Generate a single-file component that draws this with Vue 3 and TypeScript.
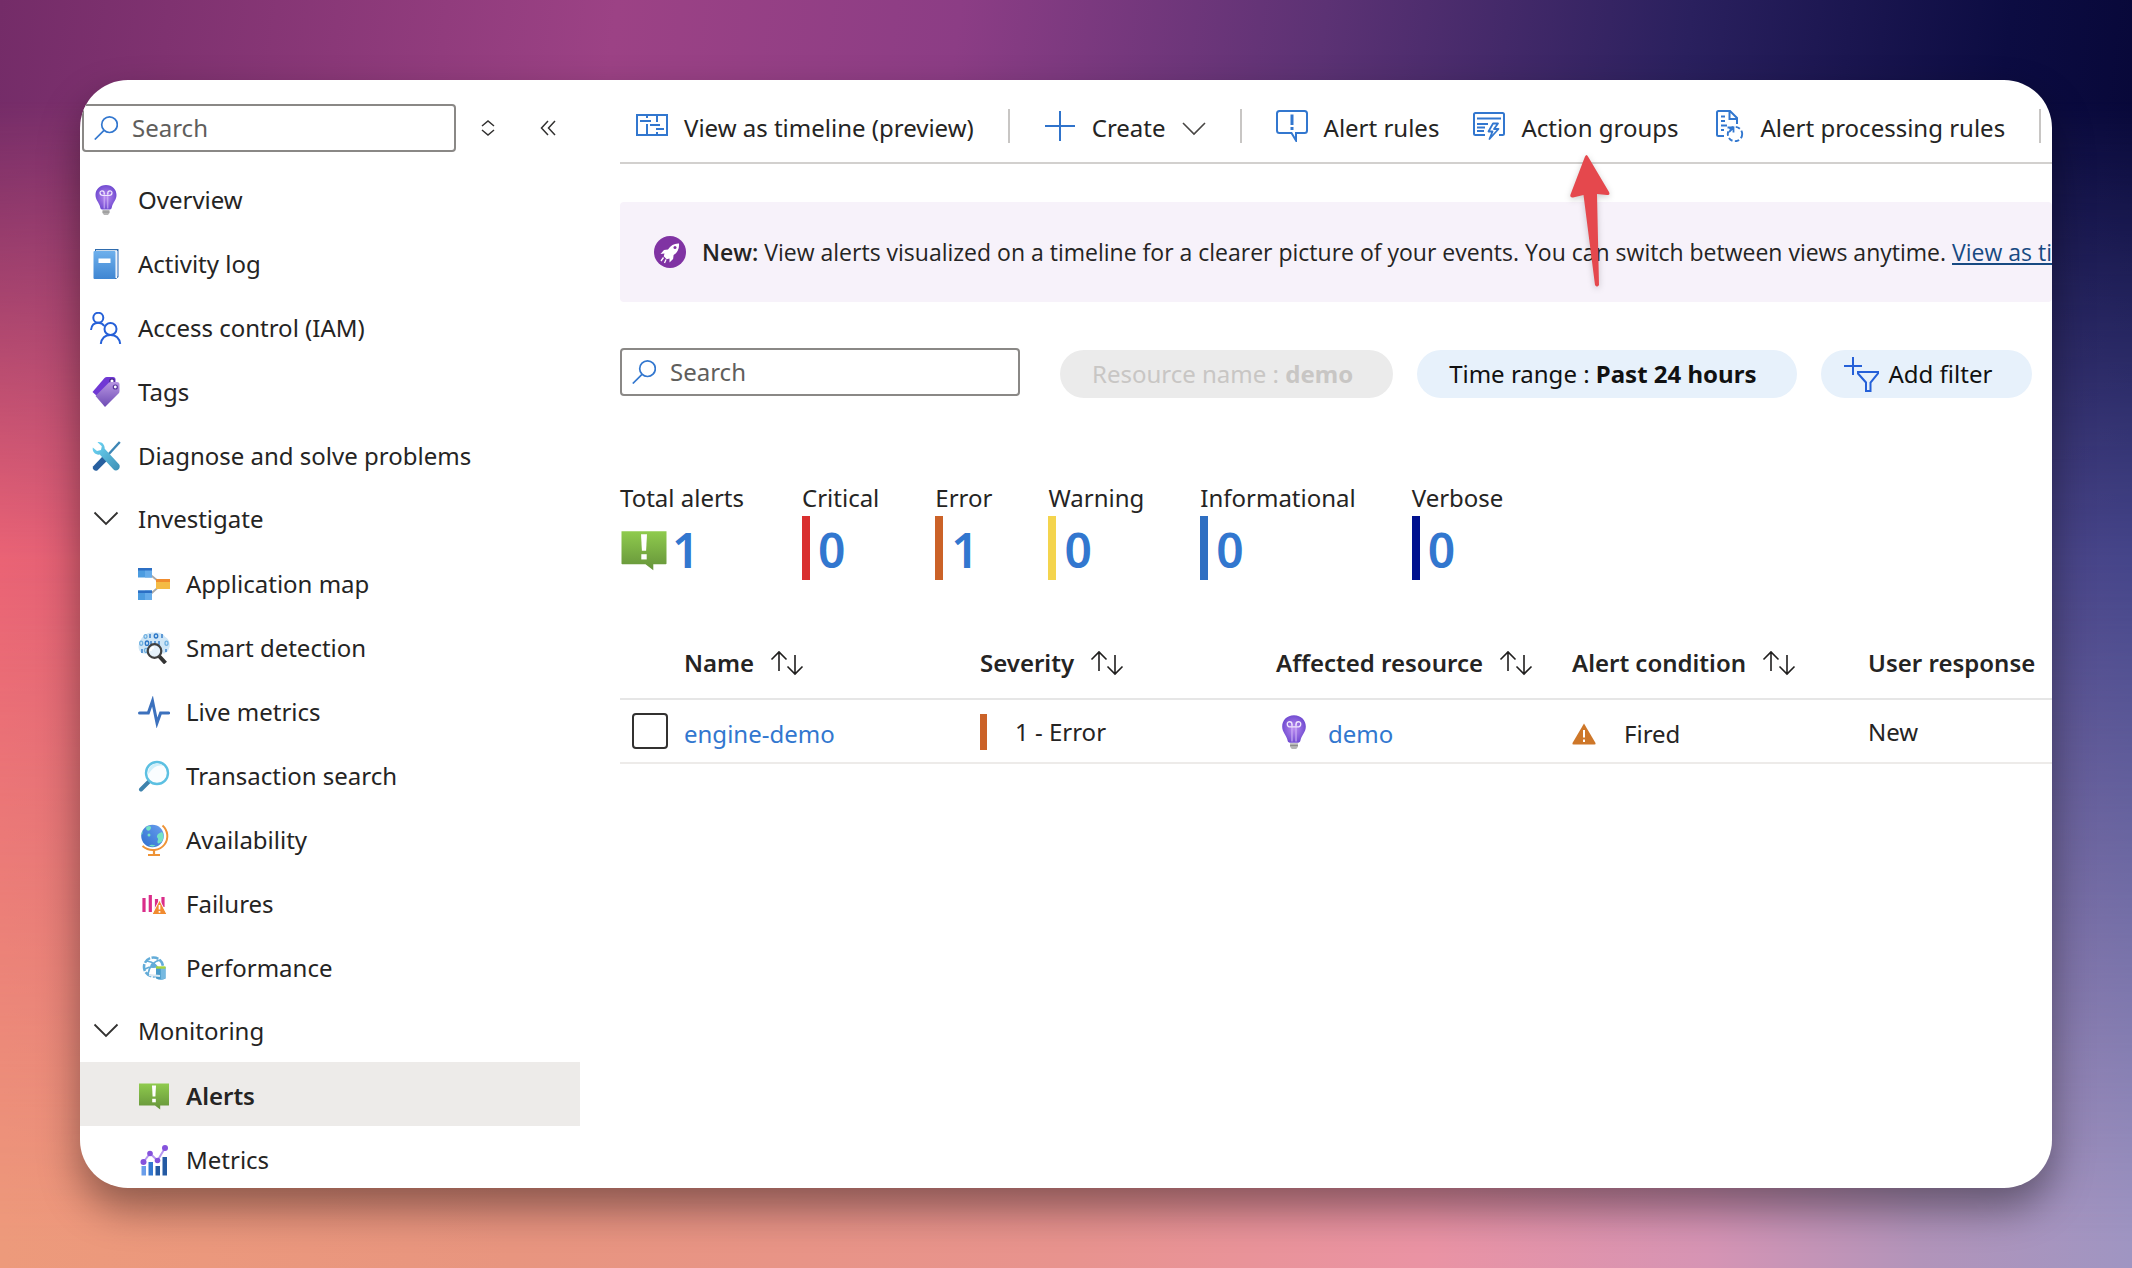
<script setup lang="ts">
interface NavItem {
  label: string
  icon: string
  level: 'top' | 'group' | 'child'
  active?: boolean
}

interface Counter {
  label: string
  value: number
  tone: string
}

const navItems: NavItem[] = [
  { label: 'Overview', icon: 'bulb', level: 'top' },
  { label: 'Activity log', icon: 'book', level: 'top' },
  { label: 'Access control (IAM)', icon: 'people', level: 'top' },
  { label: 'Tags', icon: 'tags', level: 'top' },
  { label: 'Diagnose and solve problems', icon: 'tools', level: 'top' },
  { label: 'Investigate', icon: 'chevron', level: 'group' },
  { label: 'Application map', icon: 'appmap', level: 'child' },
  { label: 'Smart detection', icon: 'smart', level: 'child' },
  { label: 'Live metrics', icon: 'pulse', level: 'child' },
  { label: 'Transaction search', icon: 'lens', level: 'child' },
  { label: 'Availability', icon: 'globe', level: 'child' },
  { label: 'Failures', icon: 'failures', level: 'child' },
  { label: 'Performance', icon: 'performance', level: 'child' },
  { label: 'Monitoring', icon: 'chevron', level: 'group' },
  { label: 'Alerts', icon: 'alert', level: 'child', active: true },
  { label: 'Metrics', icon: 'metrics', level: 'child' },
]

const counters: Counter[] = [
  { label: 'Total alerts', value: 1, tone: 'total' },
  { label: 'Critical', value: 0, tone: 'critical' },
  { label: 'Error', value: 1, tone: 'error' },
  { label: 'Warning', value: 0, tone: 'warning' },
  { label: 'Informational', value: 0, tone: 'info' },
  { label: 'Verbose', value: 0, tone: 'verbose' },
]

const columns: string[] = ['Name', 'Severity', 'Affected resource', 'Alert condition', 'User response']
</script>

<template>
  <div class="backdrop">
    <svg class="sprite" aria-hidden="true">
      <defs>
        <radialGradient id="g-bulb" cx="50%" cy="50%" r="55%">
          <stop offset="0" stop-color="#b98af0" />
          <stop offset="1" stop-color="#6c47cf" />
        </radialGradient>
        <linearGradient id="g-book" x1="0" y1="0" x2="0" y2="1">
          <stop offset="0" stop-color="#6eb0ec" />
          <stop offset="1" stop-color="#3f86d2" />
        </linearGradient>
        <linearGradient id="g-tag" x1="0" y1="0" x2="0" y2="1">
          <stop offset="0" stop-color="#b795e2" />
          <stop offset="1" stop-color="#6e4bb4" />
        </linearGradient>
        <linearGradient id="g-wrench" x1="0" y1="0" x2="1" y2="1">
          <stop offset="0" stop-color="#6fd8f7" />
          <stop offset="1" stop-color="#3c8fb5" />
        </linearGradient>
        <linearGradient id="g-green" x1="0" y1="0" x2="0" y2="1">
          <stop offset="0" stop-color="#8fcb4d" />
          <stop offset="1" stop-color="#65933a" />
        </linearGradient>
        <linearGradient id="g-globe" x1="1" y1="0" x2="0" y2="1">
          <stop offset="0" stop-color="#6aa0ee" />
          <stop offset="1" stop-color="#2f6fd0" />
        </linearGradient>
      </defs>
      <symbol id="bulb" viewBox="0 0 32 32">
        <path d="M16 1C9.600 1 5.500 5.500 5.500 11c0 5 3.400 7.300 4.500 11.500.3 1.700.8 3 2.200 3h7.600c1.400 0 1.900-1.300 2.200-3C23.100 18.300 26.500 16 26.500 11 26.500 5.500 22.400 1 16 1z" fill="url(#g-bulb)" />
        <path d="M14.200 24.500V9M17.800 24.500V9" stroke="#d3b9f7" stroke-width="0.900" fill="none" />
        <path d="M14.200 10.500V9c0-2.800-4.200-2.800-4.200-.2 0 2 1.500 2.700 3 2.700h6c1.500 0 3-.7 3-2.700 0-2.600-4.200-2.600-4.200.2v1.500" stroke="#f1e8fd" stroke-width="1.200" fill="none" />
        <path d="M12.500 26h7v3l-1.500 2h-4l-1.500-2z" fill="#b5b5b5" />
        <path d="M12.500 28h7" stroke="#8c8c8c" stroke-width="1" />
      </symbol>
      <symbol id="book" viewBox="0 0 32 32">
        <path d="M5 1h23.500v28L26 31H5z" fill="#2f6cae" />
        <path d="M6 2.200h21V30H6z" fill="#fff" />
        <path d="M27.600 3v25.500" stroke="#8fb0dc" stroke-width="1.500" />
        <rect x="3.500" y="3" width="22" height="28" rx="1" fill="url(#g-book)" />
        <rect x="8.500" y="10.500" width="12" height="4.500" fill="#fff" />
      </symbol>
      <symbol id="people" viewBox="0 0 32 32">
        <g fill="none" stroke="#2560d8" stroke-width="2">
          <circle cx="8.300" cy="5.800" r="5" />
          <path d="M1 18c.5-5 3.500-7.300 7.300-7.300 2.800 0 4.800 1.300 6 3.300" />
          <circle cx="20.500" cy="17" r="6" />
          <path d="M10.800 32c.8-5.800 4.500-9 9.700-9s8.900 3.200 9.700 9" />
        </g>
      </symbol>
      <symbol id="tags" viewBox="0 0 32 32">
        <path d="M2.500 16 14.500 2q1-1 2.500-1h6q2.500 0 2.500 2.500V8L8 21z" fill="#7038d4" />
        <circle cx="22" cy="5" r="2.200" fill="#fff" stroke="#45218d" stroke-width="1.200" />
        <path d="M5.500 20 18.500 7q1-1 2.500-1h6q2.500 0 2.500 2.500V15q0 1.500-1 2.500L15 31z" fill="url(#g-tag)" />
        <circle cx="25.300" cy="11" r="2" fill="#fff" stroke="#55339a" stroke-width="1.200" />
      </symbol>
      <symbol id="tools" viewBox="0 0 32 32">
        <path d="M29.800 2 17.500 15.500" stroke="#3d86b5" stroke-width="2.400" />
        <path d="m3 26.500 9.500-10 4.300 4.500-9.500 9.500q-2 .8-3.600-.7T3 26.500z" fill="#28609f" />
        <path d="M7.500 2.200c4.200-.8 7.300 2.300 7.200 6.500L29 24.200c1.300 1.700.8 4-.7 5.300s-3.600 1.300-5-.3L9.700 14.600C5.500 15.200 2 11.700 2.800 7.500L7 11l4-1 .8-3.700z" fill="url(#g-wrench)" />
      </symbol>
      <symbol id="chevron" viewBox="0 0 32 32">
        <path d="m4.500 9.500 11.500 11.500L27.500 9.500" fill="none" stroke="#323130" stroke-width="1.800" />
      </symbol>
      <symbol id="appmap" viewBox="0 0 32 32">
        <path d="M12 6.500 20 13M12 26.500l8-7" stroke="#a9a9a9" stroke-width="1.800" />
        <rect width="14" height="9.500" fill="#4c9ce0" />
        <rect x="7" width="7" height="9.500" fill="#66acea" />
        <rect width="14" height="2.500" fill="#2c6fc4" />
        <rect y="22.500" width="14" height="9.500" fill="#4c9ce0" />
        <rect x="7" y="22.500" width="7" height="9.500" fill="#66acea" />
        <rect y="22.500" width="14" height="2.500" fill="#2c6fc4" />
        <rect x="18" y="11" width="14" height="10" fill="#f4bb45" />
        <rect x="18" y="11" width="14" height="3" fill="#f08c2e" />
      </symbol>
      <symbol id="smart" viewBox="0 0 32 32">
        <path d="M7 3.500C9 .5 13 0 16 .8c4-.8 9 0 11 4 4 1.700 5.500 7 4.500 10.500s-2 5.200-5 6.200H5C.5 20 0 15 1 12s2-6.500 6-8.500z" fill="#cfe6f6" />
        <g fill="none" stroke="#2e78c7" stroke-width="1.400">
          <path d="M12 2v4M24 2v4M13 9v4.500M17 9v4.500M21 9v4.500M4 17v4M28 17v3" />
          <ellipse cx="18" cy="4" rx="1.700" ry="2" />
          <ellipse cx="9" cy="11.200" rx="1.700" ry="2.200" />
        </g>
        <g fill="none" stroke="#6fb0e0" stroke-width="1.300">
          <ellipse cx="7.500" cy="4.500" rx="1.500" ry="1.800" />
          <ellipse cx="3.200" cy="11.200" rx="1.500" ry="2.100" />
          <ellipse cx="28.500" cy="11.200" rx="1.500" ry="2.100" />
          <ellipse cx="8" cy="18.500" rx="1.500" ry="2.100" />
        </g>
        <path d="m21 24 6.500 7" stroke="#333" stroke-width="4" />
        <circle cx="16.500" cy="19" r="6.800" fill="#e6f2fb" stroke="#404040" stroke-width="2.200" />
        <path d="M12.500 19c.3-2 1.500-3.300 3.500-3.700" stroke="#fff" stroke-width="2" fill="none" />
      </symbol>
      <symbol id="pulse" viewBox="0 0 32 32">
        <path d="M1.500 17h8.800L14.500 5l4.500 22 3.600-10h8" fill="none" stroke="#3c71bd" stroke-width="3" stroke-linecap="round" stroke-linejoin="miter" />
      </symbol>
      <symbol id="lens" viewBox="0 0 32 32">
        <path d="m3 29.500 9-9" stroke="#3f83ad" stroke-width="4" stroke-linecap="round" />
        <circle cx="19" cy="13" r="11" fill="#fafdff" stroke="#5cc0e2" stroke-width="2.400" />
        <path d="M10 13a9 9 0 0 1 9-9.500c3 0 5 1 6.500 2.500-6-1.500-10 1-15 8z" fill="#cfeffa" />
      </symbol>
      <symbol id="globe" viewBox="0 0 32 32">
        <circle cx="14.500" cy="12" r="11.300" fill="url(#g-globe)" />
        <path d="M9 2.500c2-1.200 4.500-.6 4 1.500s-2 3-3.500 2.500S7.500 3.500 9 2.500zM24 8c2 2.500 2 7-.5 10-2 1.500-3.500 2-4 .5-.5-1.800 1-2.500.5-4-2-1.500-1.300-5 4-6.500zM4.500 6 3 11l1.500-1zM11 21.500c2-1.300 4-1 6.500 0-1.500 1.200-4.500 1.500-6.500 0z" fill="#74e3c4" />
        <circle cx="11" cy="11" r="1.500" fill="#74e3c4" />
        <path d="M24.500 1.500C30 6.500 31 14.500 26.500 20.500S12 28.500 4.500 22" fill="none" stroke="#ee9336" stroke-width="2" />
        <path d="M16 26.500v3.500M10 31h12" stroke="#ee9336" stroke-width="2.200" />
      </symbol>
      <symbol id="failures" viewBox="0 0 32 32">
        <path d="M6 10v14M12.300 7v17M18.500 11v12M25 9v10" stroke="#da2d8a" stroke-width="3.200" />
        <path d="M21.500 12 29 26.500H14z" fill="#f18b30" stroke="#fff" stroke-width="1" />
        <path d="M21.500 17v4.500M21.500 23v1.800" stroke="#fff" stroke-width="1.700" />
      </symbol>
      <symbol id="performance" viewBox="0 0 32 32">
        <g fill="none" stroke="#63acd8" stroke-width="1.600">
          <circle cx="15.500" cy="15" r="9.500" stroke-width="2.600" stroke-dasharray="7 1.500" />
          <path d="M9 9c6 1 11 5 13 11M22 8c-6 1-11 7-12 14M7 17c5-3 11-3 17 0" />
        </g>
        <circle cx="15" cy="13.500" r="2.500" fill="#63acd8" />
        <path d="M18 15h9.500v11.500q-4.700 2.500-9.500 0z" fill="#4b9ccb" />
        <path d="M22.800 15h4.700v11.500l-4.700 1.300z" fill="#76b9e0" />
        <path d="M18 15.500h9.500" stroke="#a9d43c" stroke-width="2.400" />
        <path d="m11 23 11 1" stroke="#dce9f2" stroke-width="2" />
      </symbol>
      <symbol id="alert" viewBox="0 0 32 32">
        <path d="M1 3.500h30V25q0 .5-.5.5h-8.300v4L17 25.500H1.500q-.5 0-.5-.5z" fill="url(#g-green)" />
        <path d="M14 5.500h4l-.6 11h-2.800z" fill="#fff" />
        <rect x="14.200" y="18.800" width="3.600" height="3.500" fill="#fff" />
      </symbol>
      <symbol id="metrics" viewBox="0 0 32 32">
        <rect x="3.500" y="22" width="4.500" height="9.500" fill="#6b9eea" />
        <rect x="10.500" y="18" width="4.500" height="13.500" fill="#3378d0" />
        <rect x="17.500" y="22" width="4.500" height="9.500" fill="#245aa3" />
        <rect x="24.500" y="13" width="4.500" height="18.500" fill="#245aa3" />
        <path d="m5.500 18 6.500-8.500 7.500 7L27 4" fill="none" stroke="#b596f0" stroke-width="2" />
        <g fill="#8552dc">
          <circle cx="5.500" cy="18" r="3" /><circle cx="12" cy="9.500" r="2.800" />
          <circle cx="19.500" cy="16.500" r="2.800" /><circle cx="27" cy="4" r="3" />
        </g>
      </symbol>
      <symbol id="search" viewBox="0 0 24 24">
        <circle cx="15.500" cy="8.700" r="7.800" fill="none" stroke="#3277cf" stroke-width="1.700" />
        <path d="M10 14.300.8 23.500" stroke="#3277cf" stroke-width="1.700" />
      </symbol>
      <symbol id="timeline" viewBox="0 0 32 32">
        <g fill="none" stroke="#3277cf" stroke-width="2">
          <rect x="1" y="5" width="30" height="20" />
          <path d="M11 5v3M21 5v7M4 11h11M11 14v11M14 15h10M21 22v3M20 19h8" />
        </g>
      </symbol>
      <symbol id="plus" viewBox="0 0 32 32">
        <path d="M1 16h30M16 1v30" stroke="#2f73cb" stroke-width="2" />
      </symbol>
      <symbol id="rules" viewBox="0 0 32 32">
        <path d="M3.500 1h25Q31 1 31 3.500v17q0 2.500-2.500 2.500H20v7.500L15.500 23h-12Q1 23 1 20.500v-17Q1 1 3.500 1z" fill="none" stroke="#3277cf" stroke-width="2" />
        <path d="M16 4.500v10.500M16 17v3" stroke="#3277cf" stroke-width="3" />
      </symbol>
      <symbol id="groups" viewBox="0 0 32 32">
        <path d="M12 25H2.500Q1 25 1 23.500v-19Q1 3 2.500 3h27Q31 3 31 4.500v19q0 1.500-1.500 1.500H26" fill="none" stroke="#3277cf" stroke-width="2" />
        <path d="M4 8.500h24M4 14h11M4 17.500h8M4 21h7" fill="none" stroke="#3277cf" stroke-width="1.800" />
        <path d="m20 13.500-4.500 8h4l-3 7.500 9-10h-4.500l4-5.500z" fill="#fff" stroke="#3277cf" stroke-width="1.800" stroke-linejoin="round" />
      </symbol>
      <symbol id="processing" viewBox="0 0 32 32">
        <path d="M11 26H5.500Q4 26 4 24.500v-22Q4 1 5.500 1H17l7 7v6M16.500 1v8H24" fill="none" stroke="#3277cf" stroke-width="2" />
        <path d="M8 6.500h4M8 11h4M8 15.500h6M8 20h3" stroke="#3277cf" stroke-width="2" />
        <circle cx="22" cy="24" r="7.200" fill="none" stroke="#3277cf" stroke-width="1.900" stroke-dasharray="4.500 2.400" />
        <path d="M14.500 17.500h6v5M20 18l-4 4" fill="none" stroke="#3277cf" stroke-width="1.800" />
      </symbol>
      <symbol id="rocket" viewBox="0 0 32 32">
        <circle cx="16" cy="16" r="16" fill="#8033a3" />
        <path d="M25 7.500c-4.500-.3-8.500 2-11 6l-4 .5-3.500 4 4-.5-.8 2.800 3 3 2.800-.8 0 4 3.600-3.500.5-4c4-2.500 5.900-7 5.400-11.500z" fill="#fff" />
        <circle cx="21" cy="11.500" r="1.500" fill="#8033a3" />
        <path d="M9.500 21.500 7 25M12 23.500 10.500 27" stroke="#fff" stroke-width="1.300" />
      </symbol>
      <symbol id="filter" viewBox="0 0 36 36">
        <path d="M1 10h18M10 1v18" stroke="#2560d8" stroke-width="2" />
        <path d="M15 16h20v1.500l-7.500 9V35h-4.500v-8.500L15 17.500z" fill="none" stroke="#2560d8" stroke-width="2" />
      </symbol>
      <symbol id="sort" viewBox="0 0 34 26">
        <path d="M9 21V2M1.500 9.500 9 2l7.500 7.500M25 5v19M17.500 16.500 25 24l7.500-7.500" fill="none" stroke="#201f1e" stroke-width="1.600" />
      </symbol>
      <symbol id="fired" viewBox="0 0 24 24">
        <path d="M12 1.500 23.500 21q.5 1.500-1 1.500h-21q-1.500 0-1-1.500z" fill="#ce7729" />
        <path d="M12 8v7.500M12 17.500V20" stroke="#fff" stroke-width="2" />
      </symbol>
    </svg>

    <div class="window">
      <aside class="sidebar">
        <div class="sidebar-tools">
          <label class="search-box">
            <svg class="glyph"><use href="#search" /></svg>
            <input type="text" placeholder="Search" aria-label="Search menu" />
          </label>
          <button class="tool sort-tool" type="button" aria-label="Reorder menu">
            <svg viewBox="0 0 16 16"><path d="M2 6l6-5 6 5M2 10l6 5 6-5" /></svg>
          </button>
          <button class="tool" type="button" aria-label="Collapse menu">
            <svg viewBox="0 0 16 16"><path d="M8 1 1.500 8 8 15M15 1 8.500 8l6.500 7" /></svg>
          </button>
        </div>
        <nav>
          <a
            v-for="item in navItems"
            :key="item.label"
            href="#"
            class="nav-item"
            :class="[item.level, { active: item.active }]"
          >
            <svg class="nav-icon"><use :href="'#' + item.icon" /></svg>
            <span>{{ item.label }}</span>
          </a>
        </nav>
      </aside>

      <main class="content">
        <div class="toolbar">
          <button type="button"><svg class="icon"><use href="#timeline" /></svg>View as timeline (preview)</button>
          <i class="divider"></i>
          <button type="button">
            <svg class="icon"><use href="#plus" /></svg>Create
            <svg class="caret" viewBox="0 0 24 24"><path d="m1 7 11 11L23 7" /></svg>
          </button>
          <i class="divider"></i>
          <button type="button"><svg class="icon"><use href="#rules" /></svg>Alert rules</button>
          <div class="pointed">
            <button type="button"><svg class="icon"><use href="#groups" /></svg>Action groups</button>
            <svg class="arrow" viewBox="0 0 42 136" aria-hidden="true">
              <path d="M16 2.500q1.500-3 3 0L40 38q1.500 3.500-2 3l-10-1 2 91q-2 3-4 0L14.500 41 4 43.500q-3.500.5-2.500-3z" fill="#e5484d" stroke="none" />
            </svg>
          </div>
          <button type="button"><svg class="icon"><use href="#processing" /></svg>Alert processing rules</button>
          <i class="divider"></i>
        </div>

        <div class="banner">
          <svg class="icon"><use href="#rocket" /></svg>
          <p>
            <strong>New:</strong> View alerts visualized on a timeline for a clearer picture of your events. You can
            switch between views anytime. <a href="#">View as timeline</a>
          </p>
        </div>

        <div class="filters">
          <label class="search-box">
            <svg class="glyph"><use href="#search" /></svg>
            <input type="text" placeholder="Search" aria-label="Search alerts" />
          </label>
          <div class="pills">
            <button class="pill" type="button" disabled><span>Resource name : <b>demo</b></span></button>
            <button class="pill" type="button"><span>Time range : <b>Past 24 hours</b></span></button>
            <button class="pill add" type="button"><svg class="filter-icon"><use href="#filter" /></svg>Add filter</button>
          </div>
        </div>

        <div class="counters">
          <div v-for="c in counters" :key="c.label" class="counter" :class="c.tone">
            <span class="counter-label">{{ c.label }}</span>
            <div class="counter-value">
              <svg v-if="c.tone === 'total'" class="total-icon"><use href="#alert" /></svg>
              <i v-else class="bar"></i>
              <a href="#">{{ c.value }}</a>
            </div>
          </div>
        </div>

        <table class="alerts">
          <thead>
            <tr>
              <th class="pick"></th>
              <th v-for="col in columns" :key="col" scope="col">
                <div class="head">{{ col }}<svg class="sort"><use href="#sort" /></svg></div>
              </th>
            </tr>
          </thead>
          <tbody>
            <tr>
              <td class="pick"><input type="checkbox" aria-label="Select engine-demo" /></td>
              <td><div class="cell"><a href="#">engine-demo</a></div></td>
              <td><div class="cell severity"><i></i>1 - Error</div></td>
              <td><div class="cell resource"><svg><use href="#bulb" /></svg><a href="#">demo</a></div></td>
              <td><div class="cell condition"><svg><use href="#fired" /></svg>Fired</div></td>
              <td>New</td>
            </tr>
          </tbody>
        </table>
      </main>
    </div>
  </div>
</template>

<style>
body {
  margin: 0;
}
</style>

<style scoped>
/* Three horizontal colour bands, cross-faded from top to bottom */
.backdrop {
  position: relative;
  z-index: 0;
  box-sizing: border-box;
  height: 100vh;
  padding: 80px;
  background: linear-gradient(97deg, #742c68 0%, #9c4285 27%, #8c3d85 42%, #5c3274 58%, #2a205e 74%, #0c0c42 88%, #040430 100%);
  color: #252423;
  font: 24px/32px "Noto Sans", "Open Sans", sans-serif;
}

.backdrop::before,
.backdrop::after {
  content: "";
  position: absolute;
  inset: 0;
  z-index: -1;
}

.backdrop::before {
  background: linear-gradient(90deg, #ea6375 0%, #a04a7c 40%, #45458a 100%);
  mask-image: linear-gradient(180deg, transparent 8%, #000 44%);
}

.backdrop::after {
  background: linear-gradient(90deg, #ed9a7b 0%, #e8957f 24%, #e8938e 50%, #ea93a4 67%, #d694b4 80%, #b294ba 90%, #9f95c2 100%);
  mask-image: linear-gradient(180deg, transparent 44%, #000 98%);
}

.sprite {
  position: absolute;
  width: 0;
  height: 0;
}

button,
input {
  color: inherit;
  font: inherit;
}

button {
  padding: 0;
  border: 0;
  background: none;
}

a {
  color: #3277cf;
  text-decoration: none;
}

.window {
  display: flex;
  gap: 40px;
  height: 100%;
  overflow: hidden;
  border-radius: 48px;
  background: #fff;
  box-shadow: 0 20px 40px rgba(0, 0, 0, 0.4);
}

.icon {
  flex: none;
  width: 32px;
  height: 32px;
}

/* Sidebar */
.sidebar {
  flex: none;
  width: 500px;
}

.sidebar-tools {
  display: flex;
  align-items: center;
  margin: 24px 0 14px 2px;
}

.search-box {
  display: flex;
  flex: none;
  align-items: center;
  gap: 14px;
  box-sizing: border-box;
  width: 374px;
  height: 48px;
  padding: 0 10px;
  border: 2px solid #8a8886;
  border-radius: 4px;
  background: #fff;
}

.search-box .glyph {
  flex: none;
  width: 24px;
  height: 24px;
}

.search-box input {
  flex: 1;
  min-width: 0;
  padding: 0;
  border: 0;
  outline: 0;
  background: none;
}

.search-box input::placeholder {
  color: #605e5c;
  opacity: 1;
}

.tool {
  display: flex;
  margin-left: 44px;
}

.tool.sort-tool {
  margin-left: 24px;
}

.tool svg {
  width: 16px;
  height: 16px;
  fill: none;
  stroke: #323130;
  stroke-width: 1.5;
}

.nav-item {
  display: flex;
  align-items: center;
  gap: 16px;
  box-sizing: border-box;
  height: 64px;
  padding: 4px 0 0 10px;
  color: #252423;
}

.nav-item.group {
  padding-top: 2px;
}

.nav-item.child {
  padding-left: 58px;
}

.nav-item.active {
  background: #edebe9;
  font-weight: 600;
}

.nav-icon {
  flex: none;
  width: 32px;
  height: 32px;
}

/* Content */
.content {
  flex: 1;
  min-width: 0;
}

.toolbar {
  display: flex;
  align-items: center;
  gap: 34px;
  box-sizing: border-box;
  height: 84px;
  padding: 14px 0 0 16px;
  border-bottom: 2px solid #d2d0ce;
  white-space: nowrap;
}

.toolbar button {
  display: flex;
  flex: none;
  align-items: center;
  gap: 16px;
}

.toolbar .icon,
.divider {
  margin-bottom: 4px;
}

.caret {
  width: 24px;
  height: 24px;
  fill: none;
  stroke: #484644;
  stroke-width: 1.6;
}

.divider {
  flex: none;
  width: 2px;
  height: 34px;
  background: #c8c6c4;
}

.pointed {
  position: relative;
  flex: none;
}

.arrow {
  position: absolute;
  top: 44px;
  left: 96px;
  width: 42px;
  height: 136px;
  filter: drop-shadow(0 2px 3px rgba(0, 0, 0, 0.2));
}

.banner {
  display: flex;
  align-items: center;
  gap: 16px;
  height: 100px;
  margin-top: 38px;
  padding-left: 34px;
  border-radius: 4px;
  background: #f7f2fa;
  font-family: "Open Sans", "Noto Sans", sans-serif;
  font-size: 23px;
  white-space: nowrap;
}

.banner p {
  margin: 0;
}

.banner strong {
  font-weight: 600;
}

.banner a {
  color: #184a82;
  text-decoration: underline;
}

.filters {
  display: flex;
  gap: 40px;
  margin-top: 46px;
}

.filters .search-box {
  width: 400px;
}

.pills {
  display: flex;
  gap: 24px;
  margin-top: 2px;
  white-space: nowrap;
}

.pill {
  display: flex;
  align-items: center;
  height: 48px;
  padding: 0 40px 0 32px;
  border-radius: 24px;
  background: #e7f1fb;
  color: #111;
}

.pill:disabled {
  background: #ebebeb;
  color: #c8c6c4;
}

.pill.add {
  gap: 10px;
  padding-left: 22px;
}

.filter-icon {
  width: 36px;
  height: 36px;
}

.counters {
  display: flex;
  gap: 56px;
  margin-top: 84px;
}

.counter.total {
  min-width: 126px;
}

.counter-label {
  display: block;
  height: 34px;
  white-space: nowrap;
}

.counter-value {
  display: flex;
  align-items: center;
  gap: 8px;
  height: 64px;
}

.counter-value a {
  margin-top: 4px;
  font-size: 48px;
  font-weight: 600;
}

.total .counter-value {
  gap: 4px;
}

.total-icon {
  width: 48px;
  height: 48px;
  margin-top: 4px;
}

.bar {
  width: 8px;
  height: 64px;
  background: currentColor;
}

.critical .bar {
  background: #d92f2f;
}

.error .bar {
  background: #cb6228;
}

.warning .bar {
  background: #f4d44d;
}

.info .bar {
  background: #2f6fc2;
}

.verbose .bar {
  background: #00118f;
}

/* Alerts table */
.alerts {
  width: 1544px;
  margin-top: 48px;
  border-collapse: collapse;
  table-layout: fixed;
  text-align: left;
}

.alerts th,
.alerts td {
  box-sizing: border-box;
  width: 296px;
  height: 64px;
  padding: 0;
  border-bottom: 2px solid #edebe9;
  white-space: nowrap;
}

.alerts th {
  height: 71px;
  border-color: #e6e6e6;
  font-weight: 600;
}

.alerts td {
  padding-top: 2px;
}

.alerts .pick {
  width: 64px;
  padding-top: 0;
}

.head {
  display: flex;
  align-items: center;
  gap: 16px;
}

.sort {
  width: 34px;
  height: 26px;
}

.pick input {
  display: block;
  box-sizing: border-box;
  width: 36px;
  height: 36px;
  margin: 0 0 0 12px;
  border: 2px solid #323130;
  border-radius: 4px;
  appearance: none;
}

.cell {
  display: flex;
  align-items: center;
}

.cell a,
.condition {
  padding-top: 4px;
}

.severity {
  gap: 28px;
}

.severity i {
  width: 7px;
  height: 36px;
  background: #cb6228;
}

.resource {
  gap: 16px;
}

.resource svg {
  width: 36px;
  height: 36px;
}

.condition {
  gap: 28px;
}

.condition svg {
  width: 24px;
  height: 24px;
}
</style>
